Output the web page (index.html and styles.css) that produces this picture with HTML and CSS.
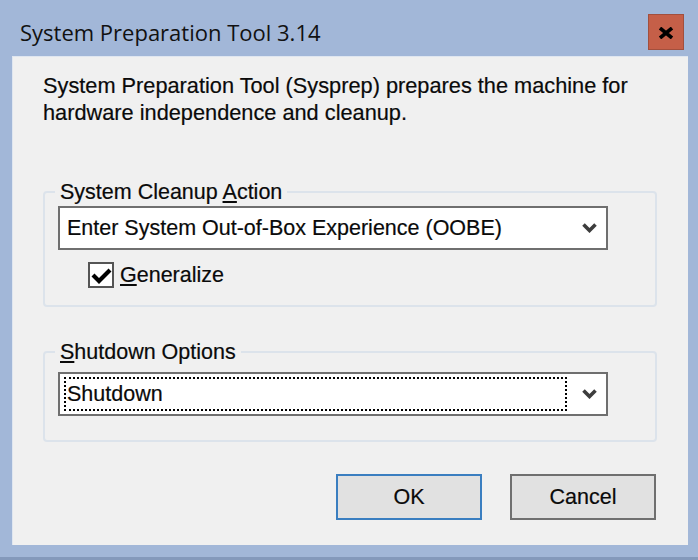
FILE: index.html
```html
<!DOCTYPE html>
<html lang="en">
<head>
<meta charset="utf-8">
<title>System Preparation Tool 3.14</title>
<link rel="stylesheet" href="styles.css">
</head>
<body>
<div class="window">
  <div class="titlebar">
    <div class="title">System Preparation Tool 3.14</div>
    <div class="close">
      <svg width="16" height="12" viewBox="0 0 16 12"><path d="M2 1 L14 11 M14 1 L2 11" stroke="#000" stroke-width="3.6" stroke-linecap="butt" fill="none"/></svg>
    </div>
  </div>
  <div class="client">
    <p class="intro">System Preparation Tool (Sysprep) prepares the machine for<br>hardware independence and cleanup.</p>

    <fieldset class="group group-cleanup">
      <legend>System Cleanup <u>A</u>ction</legend>
      <div class="combo">
        <span class="combo-text">Enter System Out-of-Box Experience (OOBE)</span>
        <svg class="chev" width="15" height="10" viewBox="0 0 15 10"><path d="M1.5 1.5 L7.5 7.5 L13.5 1.5" stroke="#3d3d3d" stroke-width="3.6" fill="none"/></svg>
      </div>
      <div class="check-row">
        <span class="checkbox">
          <svg width="22" height="22" viewBox="0 0 22 22"><path d="M3 11 L9 17 L20 6" stroke="#000" stroke-width="4.2" fill="none"/></svg>
        </span>
        <span class="check-label"><u>G</u>eneralize</span>
      </div>
    </fieldset>

    <fieldset class="group group-shutdown">
      <legend><u>S</u>hutdown Options</legend>
      <div class="combo combo-focus">
        <span class="focus"><span class="combo-text">Shutdown</span></span>
        <svg class="chev" width="15" height="10" viewBox="0 0 15 10"><path d="M1.5 1.5 L7.5 7.5 L13.5 1.5" stroke="#3d3d3d" stroke-width="3.6" fill="none"/></svg>
      </div>
    </fieldset>

    <div class="buttons">
      <button class="btn btn-default">OK</button>
      <button class="btn">Cancel</button>
    </div>
  </div>
</div>
</body>
</html>
```
FILE: styles.css
```css
html, body {
  margin: 0;
  padding: 0;
}
body {
  width: 698px;
  height: 560px;
  overflow: hidden;
  background: #a2b7d8;
  font-family: "Liberation Sans", Arial, sans-serif;
  font-size: 21.5px;
  color: #0a0a0a;
  -webkit-text-stroke: 0.2px #0a0a0a;
}
.window {
  box-sizing: border-box;
  height: 560px;
  display: flex;
  flex-direction: column;
  border-bottom: 3px solid #8499bb;
}
.titlebar {
  height: 56px;
  flex: none;
  display: flex;
  justify-content: space-between;
  align-items: flex-start;
  padding: 0 14px 0 20px;
}
.title {
  font-family: "Open Sans", "Noto Sans", sans-serif;
  font-size: 22px;
  line-height: 30px;
  padding-top: 17px;
  color: #111;
  -webkit-text-stroke: 0;
}
.close {
  margin-top: 14px;
  width: 36px;
  height: 36px;
  box-sizing: border-box;
  border: 1px solid #a24f3d;
  background: #c55f48;
  display: flex;
  align-items: center;
  justify-content: center;
}
.close svg {
  margin-top: 1px;
}
.client {
  flex: none;
  height: 489px;
  box-sizing: border-box;
  margin: 0 10px 0 12px;
  background: #f0f0f0;
  border-top: 1px solid #dfe6f0;
  border-left: 1px solid #dfe6f0;
  padding: 15px 31px 0 30px;
}
.intro {
  margin: 0;
  font-size: 21.75px;
  line-height: 27px;
}
.group {
  margin: 0;
  padding: 0 0 0 10px;
  border: 2px solid #dce3eb;
  border-radius: 4px;
  min-width: 0;
}
.group legend {
  padding: 0 5px;
  line-height: 24px;
}
.group-cleanup {
  margin-top: 54px;
  padding-top: 2px;
  padding-bottom: 17px;
}
.group-shutdown {
  margin-top: 33px;
  padding-top: 8px;
  padding-bottom: 24px;
}
.combo {
  box-sizing: border-box;
  width: 550px;
  height: 44px;
  margin-left: 3px;
  border: 2px solid #6f6f6f;
  background: #fff;
  display: flex;
  align-items: center;
  padding-left: 7px;
}
.combo-text {
  line-height: 24px;
  white-space: nowrap;
}
.chev {
  margin-left: auto;
  margin-right: 9px;
}
.combo-focus {
  padding-left: 4px;
}
.focus {
  box-sizing: border-box;
  width: 503px;
  height: 34px;
  border: 2px dotted #000;
  padding-left: 1px;
  display: flex;
  align-items: center;
}
.check-row {
  display: flex;
  align-items: center;
  margin-top: 12px;
  margin-left: 33px;
  gap: 6px;
}
.checkbox {
  box-sizing: border-box;
  width: 26px;
  height: 26px;
  border: 2px solid #555;
  background: #fff;
  display: flex;
  align-items: center;
  justify-content: center;
}
.check-label {
  line-height: 24px;
}
.buttons {
  display: flex;
  justify-content: flex-end;
  gap: 28px;
  margin-top: 32px;
  margin-right: 1px;
}
.btn {
  box-sizing: border-box;
  width: 146px;
  height: 46px;
  background: #e1e1e1;
  border: 2px solid #6f6f6f;
  font-family: "Liberation Sans", Arial, sans-serif;
  font-size: 21.5px;
  color: #0a0a0a;
  -webkit-text-stroke: 0.2px #0a0a0a;
  padding: 0;
}
.btn-default {
  border-color: #3a7ec0;
}
```
